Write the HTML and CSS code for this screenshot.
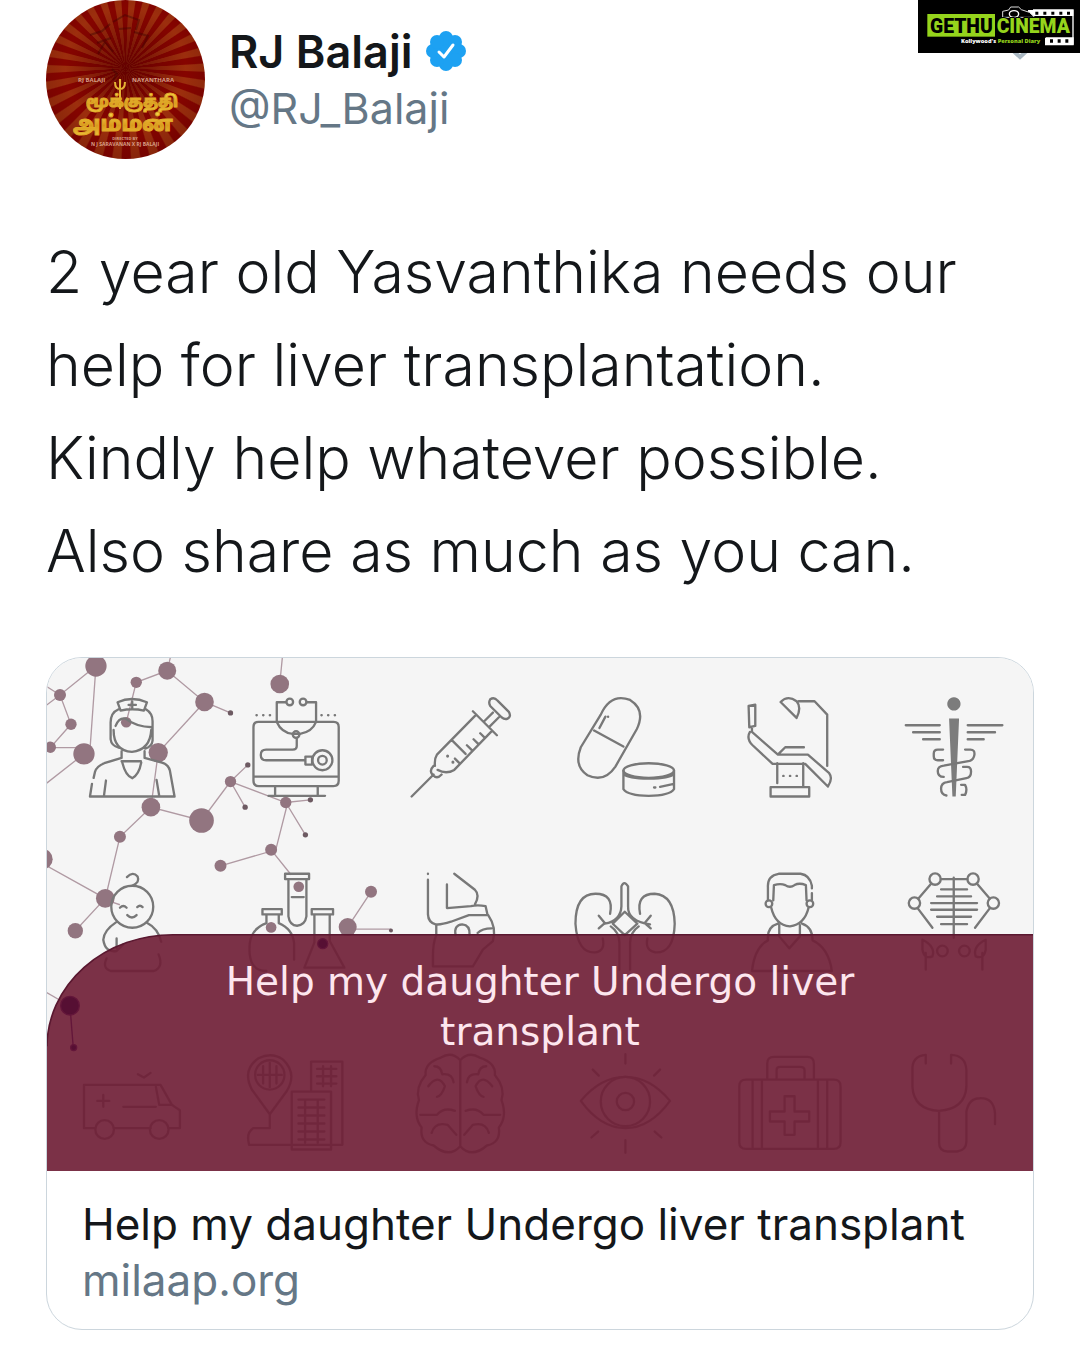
FILE: index.html
```html
<!DOCTYPE html>
<html lang="en">
<head>
	<meta charset="UTF-8">
	<meta name="viewport" content="width=device-width, initial-scale=1">
	<title>RJ Balaji</title>
	<link rel="stylesheet" href="styles.css">
</head>
<body>
<div class="watermark">
	<svg viewBox="0 0 486 159" role="img" aria-label="Gethu Cinema">
		<rect x="28" y="42" width="203" height="68" fill="#95d41c"/>
		<path d="M345 30h120v104h-82v-20" fill="none" stroke="#fff" stroke-width="4"/>
		<path d="M330 30h136v18H330z M383 112h84v22h-84z" fill="#fff"/>
		<path d="M352 35h9v9h-9z M376 35h9v9h-9z M400 35h9v9h-9z M424 35h9v9h-9z M447 35h9v9h-9z M396 118h9v10h-9z M419 118h9v10h-9z M442 118h9v10h-9z" fill="#000"/>
		<path d="M254 52V34l18-4 6-9h24l8 8 24 8 16 15z" fill="#000" stroke="#ddd" stroke-width="3"/>
		<ellipse cx="288" cy="42" rx="14" ry="10" fill="#000" stroke="#fff" stroke-width="4"/>
		<text class="logo-big" x="36" y="98" fill="#000">GETHU</text>
		<text class="logo-big" x="236" y="100" fill="#95d41c" stroke="#000" stroke-width="6" paint-order="stroke">CINEMA</text>
		<text class="logo-small" x="129" y="129" fill="#fff">Kollywood's <tspan fill="#95d41c">Personal Diary</tspan></text>
	</svg>
</div>

<article class="tweet">
	<header class="head">
		<div class="avatar">
			<svg viewBox="0 0 159 159" role="img" aria-label="Mookuthi Amman poster">
				<defs>
					<linearGradient id="gold" x1="0" y1="0" x2="0" y2="1">
						<stop offset="0" stop-color="#f6d64a"/>
						<stop offset=".5" stop-color="#d99a1c"/>
						<stop offset="1" stop-color="#f3cf45"/>
					</linearGradient>
				</defs>
				<g fill="none" stroke="#3a0603" stroke-width="2" opacity=".4">
					<path d="M44 35l12-4 8-7 M51 43l14-5 M52 54l7-12 8 10 M67 22l12-7 14 5-3 10 M88 32l14 4-6 12 M66 69l5 5-4 6 M73 29l12-1"/>
				</g>
				<text class="poster-name" x="32" y="82">RJ BALAJI</text>
				<text class="poster-name" x="86" y="82">NAYANTHARA</text>
				<path d="M74 79v30 M69 82q0 7 5 7t5-7" fill="none" stroke="#e5b334" stroke-width="2"/>
				<text class="poster-title" x="86" y="107" font-size="16">மூக்குத்தி</text>
				<text class="poster-title" x="77" y="131" font-size="22">அம்மன்</text>
				<text class="poster-by" x="79" y="140">DIRECTED BY</text>
				<text class="poster-credit" x="79" y="146">N J SARAVANAN X RJ BALAJI</text>
			</svg>
		</div>
		<div class="who">
			<div class="name">
				<h1>RJ Balaji</h1>
				<svg class="verified" viewBox="0 0 40 40" role="img" aria-label="Verified">
					<g fill="#1da1f2">
						<circle cx="20" cy="20" r="15"/>
						<circle cx="20" cy="7" r="7"/><circle cx="29" cy="11" r="7"/>
						<circle cx="33" cy="20" r="7"/><circle cx="29" cy="29" r="7"/>
						<circle cx="20" cy="33" r="7"/><circle cx="11" cy="29" r="7"/>
						<circle cx="7" cy="20" r="7"/><circle cx="11" cy="11" r="7"/>
					</g>
					<path d="M13 21l5 5 9-12" fill="none" stroke="#fff" stroke-width="3" stroke-linecap="round" stroke-linejoin="round"/>
				</svg>
			</div>
			<a class="handle" href="#">@RJ_Balaji</a>
		</div>
		<button class="more" type="button" aria-label="More">
			<svg viewBox="0 0 28 16"><path d="M3 3l11 10L25 3" fill="none" stroke="#aab8c2" stroke-width="4"/></svg>
		</button>
	</header>

	<p class="text">2 year old Yasvanthika needs our help for liver transplantation.<br>Kindly help whatever possible.<br>Also share as much as you can.</p>

	<a class="card" href="#">
		<div class="cover">
			<svg class="art" viewBox="0 0 2961 1542" aria-hidden="true">
				<rect width="2961" height="1542" fill="#f5f5f5"/>

				<!-- molecules -->
				<g transform="translate(-21 -24)">
					<g class="link">
						<path d="M20 110l40 25L168 48 150 300 M60 135l33 88-62 70h100 M20 165l40-30 M132 312L20 400"/>
						<path d="M392 20l-10 42-93 35-30 120 M382 62l112 94 78 33 M494 156L355 308l-22 164 152 40 87-117 52-50 M572 395l44 77 M572 395l166 63 74-8 M738 458l59 97 M744 458l-36 142-166 48 M694 600l60 75 M333 472l-93 89-44 185 L20 648 M196 746l-90 97 M240 765l-30-10"/>
						<path d="M728 20l-8 82 M998 720l-74 112 M924 838l130 0"/>
						<path d="M20 1029l70 40"/>
					</g>
					<g class="atom">
						<circle cx="168" cy="48" r="32"/><circle cx="60" cy="135" r="18"/><circle cx="93" cy="223" r="17"/>
						<circle cx="31" cy="292" r="17"/><circle cx="132" cy="312" r="32"/><circle cx="289" cy="97" r="17"/>
						<circle cx="382" cy="62" r="27"/><circle cx="494" cy="156" r="28"/><circle cx="259" cy="217" r="16"/>
						<circle cx="355" cy="308" r="29"/><circle cx="333" cy="472" r="28"/><circle cx="485" cy="512" r="37"/>
						<circle cx="572" cy="395" r="17"/><circle cx="720" cy="102" r="28"/><circle cx="738" cy="458" r="17"/>
						<circle cx="694" cy="600" r="18"/><circle cx="542" cy="648" r="18"/><circle cx="240" cy="561" r="18"/>
						<circle cx="196" cy="746" r="28"/><circle cx="106" cy="843" r="23"/><circle cx="8" cy="628" r="30"/>
						<circle cx="777" cy="711" r="16"/><circle cx="694" cy="833" r="16"/><circle cx="924" cy="832" r="27"/>
						<circle cx="994" cy="726" r="18"/>
					</g>
					<g fill="#6d5a62">
						<circle cx="572" cy="189" r="8"/><circle cx="624" cy="345" r="8"/><circle cx="616" cy="472" r="8"/>
						<circle cx="797" cy="555" r="8"/><circle cx="812" cy="450" r="8"/><circle cx="1054" cy="842" r="6"/>
					</g>
				</g>

				<!-- nurse, monitor, baby, test tubes -->
				<g class="line" transform="translate(-21 -24)">
					<path d="M242 182l-9-25q43-20 88 0l-9 25q-35-8-70 0z M266 165h22 M277 155v20 M236 178q-24 10-24 40v50q2 20 26 26 M318 178q20 12 20 36v58q-2 18-22 24 M227 228q10-26 30-22 30 24 80 26 M221 240q0 62 55 66 55-6 58-66 M245 304v20l-52 16q-22 8-28 26l-4 18 M314 304v20l52 14q20 6 24 24l14 78H150l6-38 M245 334h58 M247 338q10 40 30 47 20-10 27-47 M198 392l-6 46 M350 390l8 48"/>
					<path d="M710 216h-54q-15 0-15 15v162q0 16 16 16h224q16 0 16-16V231q0-15-15-15h-52 M710 216h120 M641 380h255 M706 411v26 M834 411v26 M686 438h170 M738 157h-27v59q14 32 48 36h22q36-6 48-36v-59h-27"/>
					<circle cx="750" cy="156" r="10"/><circle cx="790" cy="156" r="10"/><circle cx="769" cy="254" r="10"/>
					<path d="M771 264v24q0 11-12 11h-80q-16 0-16 16t16 16h118 M797 320h20v24h-20z"/>
					<circle cx="848" cy="331" r="30"/><circle cx="848" cy="331" r="13"/>
					<path d="M650 196h50 M845 196h52" stroke-dasharray="1 19"/>
					<circle cx="277" cy="771" r="63"/>
					<path d="M277 708q24-10 16-28-14-16-32 2 M240 774q10-10 20 0 M292 772q8-8 16 0 M262 796q14 14 28 0 M228 818q-36 24-38 52 6 40 40 34l20-20 M322 820q32 16 42 56 M230 866v30 M200 926q-14 30 12 38h130q30-12 14-50"/>
					<path d="M736 672h72v16h-72z M746 688v112q4 28 26 28 24-2 28-28V688 M756 742h36 M668 778h58v16h-58z M680 794v26q-44 16-50 60-8 84 50 84 M717 794v26q42 18 46 60v50 M816 778h64v16h-64z M824 794v84l-30 76h120l-44-80v-80"/>
				</g>

				<!-- syringe, pills, seat, kidneys -->
				<g class="line" transform="translate(969 -24)">
					<path d="M126 440l66-66 M310 184l72 72 M320 194L202 314q-8 12-6 34 M368 242L254 360q-24 14-50 0 M192 348q-14 14-4 26 14 16 28 0 M246 270l42 42 M292 286l14 14 M312 268l14 14 M332 250l14 14 M256 326l12 12 M344 214l26-26 M360 230l28-28 M362 148q12-8 22 4l34 34q8 14-4 20-8 4-18-4l-34-34q-6-10 0-20z"/>
					<path d="M234 318v1 M250 336v1" stroke-width="9"/>
					<path d="M694 194q30-66 88-44 48 30 20 88l-64 112q-34 50-84 26-42-28-20-84z M674 242l88 48 M690 234l18-34 M716 200v1"/>
					<ellipse cx="838" cy="362" rx="76" ry="22"/>
					<path d="M762 362v56q14 20 76 20t76-20v-56 M762 372q14 14 76 14t76-14 M854 413h4 M872 411l38-8"/>
					<path d="M175 672v1 M232 704v71l72-6q20-4 44 0l6 27h-56l-54 20q-30 10-46 8-22-6-23-30V690 M254 672l62 48q16 16 0 44 M200 826v30q-10 24-10 64v30h120l30-50 30-26q12-40-14-78 M258 856q-6-30 20-32 24 2 22 32 M324 850q14-14 42-14"/>
					<path d="M756 770v-60q8-20 20 0v60q-2 44 66 54 M756 770q-2 44-50 52 M766 786l-36 36 36 34 38-34z M722 792q12-60-44-60-60 0-60 90 6 90 60 86 30-4 22-42 M812 792q-12-60 44-60 58 4 60 90-2 88-58 86-32-6-24-42 M688 798l18 22-18 16 M844 798l-18 22 18 16 M724 830q26 18 26 50v80 M808 830q-26 18-26 50v80"/>
				</g>

				<!-- dentist chair, caduceus, patient, spine -->
				<g class="line" transform="translate(1959 -24)">
					<path d="M148 168l20-4v64l-18 4z M158 232v14l78 68h90l64 56q12 16-4 40l-68-68h-98l-60-56q-20-20-8-40 M238 312l20-20h56 M234 340v60 M312 340v70 M214 412h116v28H214z M244 156q22-22 48-2 16 18 0 50z M298 154h48l38 40v154"/>
					<path d="M252 378h44" stroke-dasharray="1 19"/>
					<path d="M750 206h30l-10 234h-10z M764 142a20 20 0 1 0 1 0z" fill="#7c7c7c" stroke="none"/>
					<path d="M620 226h102 M806 226h104 M642 247h80 M806 247h82 M672 268h50 M806 268h48 M732 299h-16q-12 0-12 12v8q0 12 12 12h16 M798 299h16q14 0 12 16-2 14-14 18l-78 14q-18 2-18 16 0 18 18 18 M792 351h12q12 0 12 14 0 18-14 20l-58 12q-18 2-18 20 0 18 16 20 M786 405h12q8 14 0 30h-10"/>
					<path d="M206 752v-40q-2-34 32-40h66q28 4 34 36v8 M338 730v22 M222 752l2-46q20-6 34 0 14 10 28 0 14-8 34 0l2 46 M216 774q12 52 56 56 44-6 56-56 M236 822q-34 10-30 50-40 20-48 92h240q-10-70-58-92 0-40-32-50 M240 826v34l30 36 32-36v-34 M210 856h30 M304 856h34"/>
					<circle cx="209" cy="762" r="10"/><circle cx="332" cy="762" r="10"/>
					<circle cx="708" cy="688" r="17"/><circle cx="822" cy="688" r="17"/><circle cx="646" cy="760" r="17"/><circle cx="883" cy="760" r="17"/>
					<path d="M725 688h80 M696 702l-38 44 M834 702l38 44 M656 776l44 58 M872 776l-44 58 M764 684v180 M726 719h78 M714 740h102 M696 760h138 M696 780h138 M714 801h102 M726 823h78 M670 870q40 20 30 50-24 10-30-20z M860 870q-40 20-30 50 24 10 30-20z M680 910v50 M850 910v50"/>
					<circle cx="730" cy="904" r="16"/><circle cx="796" cy="904" r="16"/>
				</g>

				<!-- ambulance, hospital -->
				<g class="line" transform="translate(-21 726)">
					<path d="M164 686h-32V556h230l34 60 24 16v54h-34 M222 686h110 M348 562l10 54h40 M250 622h98 M190 586v36 M172 604h36 M294 524l18 10 20-14"/>
					<circle cx="194" cy="690" r="28"/><circle cx="358" cy="690" r="28"/>
					<path d="M690 644l-54-74q-30-60 20-94 40-20 74 4 44 42 10 96z M690 644v42h-50q-22 14-12 50h280V486h-94v90 M756 750V576h118v174z"/>
					<circle cx="690" cy="526" r="44"/>
					<path d="M690 490v72 M654 526h72 M670 500v52 M710 500v52 M776 600h78 M776 624h78 M776 648h78 M776 672h78 M776 696h78 M776 720h78 M796 600v130 M834 600v130 M832 508h58 M832 530h58 M832 552h58 M850 500v60 M874 500v60"/>
				</g>

				<!-- brain, eye -->
				<g class="line" transform="translate(969 726)">
					<path d="M272 482q-26-28-58-8-50 16-46 52-32 38-20 76-18 50 8 82-6 46 36 54 46 40 80 2z M272 482q26-28 58-8 50 16 46 52 32 38 20 76 18 50-8 82 6 46-36 54-46 40-80 2 M272 482v260 M194 500q20 0 24 24 30-4 34 24 M176 560q30-40 50 0-10 30-24 32 M350 500q-20 0-24 24-30-4-34 24 M368 560q-30-40-50 0 10 30 24 32 M152 646h50q20-24 54-12 M392 646h-50q-20-24-54-12 M186 700q10-34 48-24l26 30 M358 700q-10-34-48-24l-26 30"/>
					<path d="M634 604q60-72 134-72t134 72q-60 82-134 82t-134-82z M768 464v28 M768 722v38 M670 510l18 18 M872 510l-18 18 M666 714l20-18 M876 714l-20-18"/>
					<circle cx="768" cy="606" r="74"/><circle cx="768" cy="606" r="26"/>
				</g>

				<!-- first aid kit, stethoscope -->
				<g class="line" transform="translate(1959 726)">
					<path d="M140 540h264q20 0 20 20v168q0 20-20 20H140q-20 0-20-20V560q0-20 20-20z M160 540v208 M188 540v208 M356 540v208 M384 540v208 M204 540v-48q0-20 20-20h100q20 0 20 20v48 M232 540v-28q0-10 10-10h60q14 0 14 10v28 M256 590h30v46h44v30h-44v40h-30v-40h-44v-30h44z"/>
					<path d="M680 466q-42 4-40 46v50q4 68 80 72 78-6 82-72v-50q-2-44-46-46 M680 466v26 M756 466v26 M720 636v94q0 26 26 26h28q28-4 28-30v-90q8-40 40-40 42-2 46 46v32"/>
				</g>

				<!-- maroon banner -->
				<path d="M0 1542V1166A378 337 0 0 1 378 831H2961V1542z" fill="#701f37" opacity=".92"/>
				<path d="M0 1166A378 337 0 0 1 378 831H2961" fill="none" stroke="#5a1830" stroke-width="5"/>
				<g fill="#560f33" stroke="#63163a" stroke-width="4">
					<path d="M69 1046l10 126"/>
					<circle cx="69" cy="1044" r="28"/><circle cx="80" cy="1170" r="9"/><circle cx="828" cy="858" r="15"/>
				</g>
			</svg>
			<p class="banner">Help my daughter Undergo liver transplant</p>
		</div>
		<div class="info">
			<h2>Help my daughter Undergo liver transplant</h2>
			<p>milaap.org</p>
		</div>
	</a>
</article>
</body>
</html>
```
FILE: styles.css
```css
* {
	box-sizing: border-box;
}
body {
	margin: 0;
	background: #fff;
	color: #14171a;
	font-family: Inter, "Liberation Sans", sans-serif;
}
h1, h2, p {
	margin: 0;
	font-weight: 400;
}
a {
	color: inherit;
	text-decoration: none;
}
svg {
	display: block;
}

.watermark {
	position: absolute;
	top: 0;
	right: 0;
	z-index: 1;
	width: 162px;
	background: #000;
}
.logo-big {
	font: 900 58px Roboto, "Liberation Sans", sans-serif;
}
.logo-small {
	font: 800 17px "Open Sans", sans-serif;
}

.tweet {
	padding: 0 46px 20px;
}
.head {
	display: flex;
	align-items: center;
	gap: 24px;
}
.avatar {
	width: 159px;
	border-radius: 50%;
	overflow: hidden;
	background:
		radial-gradient(circle at 50% 43%, rgba(90, 0, 0, .8), rgba(110, 0, 0, .2) 50%, rgba(60, 0, 0, .5)),
		repeating-conic-gradient(from 3deg at 50% 43%, #a83a10 0 5deg, #8c0500 6deg 11deg, #a83a10 12deg);
}
.poster-name {
	font: bold 6px "Open Sans", sans-serif;
	fill: #d9a08a;
}
.poster-title {
	font-family: "Noto Sans Tamil", "Noto Sans", sans-serif;
	font-weight: 800;
	text-anchor: middle;
	fill: url(#gold);
	stroke: #e0a928;
	stroke-width: 1;
}
.poster-by,
.poster-credit {
	font: bold 5px "Open Sans", sans-serif;
	text-anchor: middle;
	fill: #d9a08a;
}
.poster-by {
	font-size: 4px;
}
.who {
	flex: 1;
	line-height: 57px;
}
.name {
	display: flex;
	align-items: center;
	gap: 14px;
}
.name h1 {
	font-size: 45px;
	font-weight: 600;
}
.verified {
	width: 40px;
}
.handle {
	display: block;
	color: #657786;
	font-size: 43px;
}
.more {
	align-self: flex-start;
	margin-top: 44px;
	padding: 0;
	border: 0;
	background: none;
}
.more svg {
	width: 28px;
}

.text {
	margin-top: 66px;
	font-size: 59px;
	font-weight: 300;
	line-height: 93px;
}

.card {
	display: block;
	margin-top: 60px;
	border: 1px solid #ccd6dd;
	border-radius: 36px;
	overflow: hidden;
}
.cover {
	position: relative;
}
.art {
	width: 100%;
}
.line {
	fill: none;
	stroke: #787878;
	stroke-width: 7;
	stroke-linecap: round;
	stroke-linejoin: round;
}
.link {
	fill: none;
	stroke: #b09aa3;
	stroke-width: 4;
}
.atom {
	fill: #927580;
}
.banner {
	position: absolute;
	right: 0;
	bottom: 0;
	left: 0;
	height: 46%;
	padding: 22px 160px 0;
	color: #fde6ee;
	font-family: "DejaVu Sans", sans-serif;
	font-size: 39px;
	line-height: 50px;
	text-align: center;
}
.info {
	padding: 25px 35px 21px;
	font-size: 44px;
	line-height: 56px;
}
.info h2 {
	font-size: 44px;
}
.info p {
	color: #657786;
}
```
